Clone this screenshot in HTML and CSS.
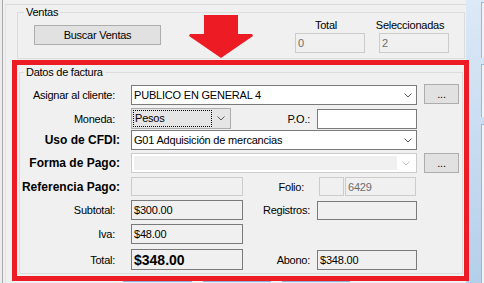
FILE: index.html
```html
<!DOCTYPE html>
<html lang="es">
<head>
  <meta charset="UTF-8" />
  <meta name="viewport" content="width=device-width, initial-scale=1.0"/>
  <title>Ventas - Datos de factura</title>
  <link rel="stylesheet" href="styles.css">
</head>
<body>

  <div class="app">
    <div class="edge"></div>

    <div class="form">
      <div class="panel">

        <!-- Ventas -->
        <fieldset class="group ventas">
          <legend>Ventas</legend>
          <div class="ventas-body">
            <button class="btn btn-buscar">Buscar Ventas</button>
            <div class="count count-total">
              <span class="count-label">Total</span>
              <input class="txt" value="0" disabled>
            </div>
            <div class="count count-sel">
              <span class="count-label">Seleccionadas</span>
              <input class="txt" value="2" disabled>
            </div>
          </div>
        </fieldset>

        <!-- Datos de factura (marcado en rojo) -->
        <div class="hl">
          <fieldset class="group datos">
            <legend>Datos de factura</legend>
            <div class="rows">

              <div class="row r1">
                <label class="lbl">Asignar al cliente:</label>
                <div class="combo w-full">
                  <span class="val">PUBLICO EN GENERAL 4</span>
                  <svg class="chev" width="8" height="5" viewBox="0 0 8 5"><polyline points="0.5,0.5 4,4 7.5,0.5" /></svg>
                </div>
                <button class="btn btn-dots">...</button>
              </div>

              <div class="row r2">
                <label class="lbl">Moneda:</label>
                <div class="combo list">
                  <span class="val">Pesos</span>
                  <svg class="chev" width="8" height="5" viewBox="0 0 8 5"><polyline points="0.5,0.5 4,4 7.5,0.5" /></svg>
                </div>
                <label class="lbl-r w86">P.O.:</label>
                <input class="txt w100 h20" value="">
              </div>

              <div class="row">
                <label class="lbl b">Uso de CFDI:</label>
                <div class="combo w-full">
                  <span class="val">G01 Adquisición de mercancias</span>
                  <svg class="chev" width="8" height="5" viewBox="0 0 8 5"><polyline points="0.5,0.5 4,4 7.5,0.5" /></svg>
                </div>
              </div>

              <div class="row">
                <label class="lbl b">Forma de Pago:</label>
                <div class="combo off w-full">
                  <span class="val"></span>
                  <span class="chev-box">
                    <svg class="chev" width="8" height="5" viewBox="0 0 8 5"><polyline points="0.5,0.5 4,4 7.5,0.5" /></svg>
                  </span>
                </div>
                <button class="btn btn-dots">...</button>
              </div>

              <div class="row">
                <label class="lbl b">Referencia Pago:</label>
                <input class="txt w112 h19" value="" disabled>
                <label class="lbl-r w76 folio">Folio:</label>
                <input class="txt folio-serie h19" value="" disabled>
                <input class="txt folio-num h19" value="6429" disabled>
              </div>

              <div class="row">
                <label class="lbl">Subtotal:</label>
                <input class="txt ro w112" value="$300.00" readonly>
                <label class="lbl-r w74">Registros:</label>
                <input class="txt ro w100 h19" value="" readonly>
              </div>

              <div class="row">
                <label class="lbl">Iva:</label>
                <input class="txt ro w112" value="$48.00" readonly>
              </div>

              <div class="row r8">
                <label class="lbl">Total:</label>
                <input class="txt ro big w112" value="$348.00" readonly>
                <label class="lbl-r w74">Abono:</label>
                <input class="txt ro w100" value="$348.00" readonly>
              </div>

            </div>
          </fieldset>
        </div>

        <!-- only the top edge of these buttons is visible -->
        <div class="bottom-btns">
          <span class="btn-b b1"></span>
          <span class="btn-b"></span>
          <span class="btn-b"></span>
        </div>

      </div>
    </div>

    <div class="side">
      <div class="side-box s1"></div>
      <div class="side-box s2"></div>
      <div class="side-box s3"></div>
    </div>

    <!-- flecha roja de anotación -->
    <svg class="arrow" width="64" height="44" viewBox="0 0 64 44">
      <polygon points="15,0 49,0 49,19 63,19 64,21 32,43 0,21 1,19 15,19" />
    </svg>
  </div>

</body>
</html>
```

FILE: styles.css
```css
html,
body {
  margin: 0;
  height: 283px;
  overflow: hidden;
}

body {
  font-family: "Liberation Sans", Arial, sans-serif;
  font-size: 11px;
  color: #000;
  background: linear-gradient(#dce9f7, #b4cfeb);
}

.app {
  position: relative;
  display: flex;
  height: 283px;
  overflow: hidden;
}

.edge {
  width: 2px;
  background-color: #ececec;
  border-right: 1px solid #a9a9a9;
}

.form {
  width: 463px;
  background-color: #f0f0f0;
  padding-top: 4px;
}

.panel {
  margin-left: 2px;
  border-top: 1px solid #dadada;
  border-left: 1px solid #e4e4e4;
}

/* group boxes */
.group {
  box-sizing: border-box;
  min-width: 0;
  margin: 0;
  border: 1px solid #dcdcdc;
  padding: 0;
}

.group legend {
  padding: 0 2px;
  line-height: 13px;
  letter-spacing: -0.25px;
}

.ventas {
  width: 448px;
  margin: 1px 0 0 11px;
  padding-bottom: 5px;
}

.ventas legend {
  margin-left: 6px;
}

.ventas-body {
  display: flex;
  align-items: flex-start;
}

.count {
  display: flex;
  flex-direction: column;
  align-items: center;
  width: 70px;
}

.count-total {
  margin-left: 134px;
}

.count-sel {
  margin-left: 14px;
}

.count-label {
  margin-right: 8px;
  line-height: 13px;
  letter-spacing: -0.25px;
  white-space: nowrap;
}

.count .txt {
  width: 70px;
  margin-top: 1px;
}

/* red highlight */
.hl {
  box-sizing: border-box;
  width: 457px;
  margin: 1px 0 0 6px;
  border: 5px solid #ed1c24;
}

.datos {
  width: 444px;
  margin: 1px 0 2px 2px;
  padding-bottom: 3px;
}

.datos legend {
  margin-left: 4px;
}

.rows {
  display: grid;
  grid-template-rows: 24px 22px 23px 24px 23px 24px 25px 21px;
  padding-top: 5px;
}

.row {
  display: flex;
  align-items: center;
  align-self: start;
}

.lbl {
  flex: none;
  box-sizing: border-box;
  width: 111px;
  padding-right: 16px;
  text-align: right;
  white-space: nowrap;
  letter-spacing: -0.25px;
}

.lbl.b {
  padding-right: 11px;
  font-size: 12px;
  font-weight: bold;
  letter-spacing: 0;
}

.lbl-r {
  flex: none;
  box-sizing: border-box;
  padding-right: 7px;
  text-align: right;
  white-space: nowrap;
  letter-spacing: -0.25px;
}

.lbl-r.folio {
  padding-right: 15px;
}

.w86 { width: 86px; }
.w76 { width: 76px; }
.w74 { width: 74px; }

/* text boxes */
.txt {
  flex: none;
  box-sizing: border-box;
  height: 20px;
  margin: 0;
  border: 1px solid #7a7a7a;
  border-radius: 0;
  padding: 0 2px;
  background-color: #fff;
  font: inherit;
  letter-spacing: -0.2px;
  color: #000;
  outline: none;
}

.txt.ro {
  background-color: #f0f0f0;
}

.txt:disabled {
  background-color: #f0f0f0;
  border-color: #cccccc;
  color: #6d6d6d;
}

.txt.big {
  height: 21px;
  font-size: 14px;
  font-weight: bold;
  letter-spacing: 0;
}

.w112 { width: 112px; }
.w100 { width: 100px; }
.h20 { height: 20px; }
.h19 { height: 19px; }

.folio-serie {
  width: 25px;
  margin-right: 1px;
}

.folio-num {
  width: 71px;
}

/* combo boxes */
.combo {
  flex: none;
  display: flex;
  align-items: center;
  box-sizing: border-box;
  height: 20px;
  border: 1px solid #7a7a7a;
  padding-left: 2px;
  background-color: #fff;
}

.combo .val {
  flex: 1;
  white-space: nowrap;
  letter-spacing: -0.2px;
}

.chev {
  flex: none;
  margin-right: 4px;
}

.chev polyline {
  fill: none;
  stroke: #5a5a5a;
  stroke-width: 1;
}

.w-full {
  width: 286px;
}

.r1 .combo {
  margin-top: 1px;
}

.combo.list {
  width: 100px;
  height: 21px;
  border-color: #acacac;
  padding: 1px;
  background-color: #e5e5e5;
}

.combo.list .val {
  flex: none;
  box-sizing: border-box;
  width: 79px;
  height: 17px;
  border: 1px dotted #000;
  padding-left: 1px;
  line-height: 15px;
}

.combo.list .chev {
  margin-left: 5px;
}

.combo.off {
  border-color: #cccccc;
  padding: 2px;
}

.combo.off .val {
  align-self: stretch;
  background-color: #f0f0f0;
}

.chev-box {
  display: flex;
  justify-content: center;
  width: 17px;
}

.chev-box .chev {
  margin: 0;
}

.combo.off .chev polyline {
  stroke: #c2c2c2;
}

/* buttons */
.btn {
  flex: none;
  box-sizing: border-box;
  height: 20px;
  margin: 0;
  border: 1px solid #adadad;
  padding: 0;
  background-color: #e1e1e1;
  font: inherit;
  letter-spacing: -0.25px;
  color: #000;
}

.btn-buscar {
  width: 127px;
  margin: 6px 0 0 16px;
}

.btn-dots {
  width: 35px;
  margin-left: 7px;
}

.r1 .btn-dots {
  align-self: flex-start;
}

.bottom-btns {
  display: flex;
  gap: 11px;
  margin-left: 117px;
}

.btn-b {
  box-sizing: border-box;
  width: 68px;
  height: 2px;
  border-top: 1px solid #8fb3d9;
  background-color: #e3eef9;
}

.btn-b.b1 {
  width: 69px;
}

/* right side strip */
.side {
  width: 18px;
}

.side-box {
  box-sizing: border-box;
  width: 3px;
  margin-left: 15px;
  border-left: 1px solid #9fb7d0;
  border-top: 1px solid #9fb7d0;
  background-color: #f3f3f3;
}

.s1 { height: 56px; margin-top: 2px; }
.s2 { height: 53px; margin-top: 6px; }
.s3 { height: 160px; margin-top: 7px; }

/* annotation arrow */
.arrow {
  position: absolute;
  left: 189px;
  top: 15px;
}

.arrow polygon {
  fill: #ed1c24;
}
```
